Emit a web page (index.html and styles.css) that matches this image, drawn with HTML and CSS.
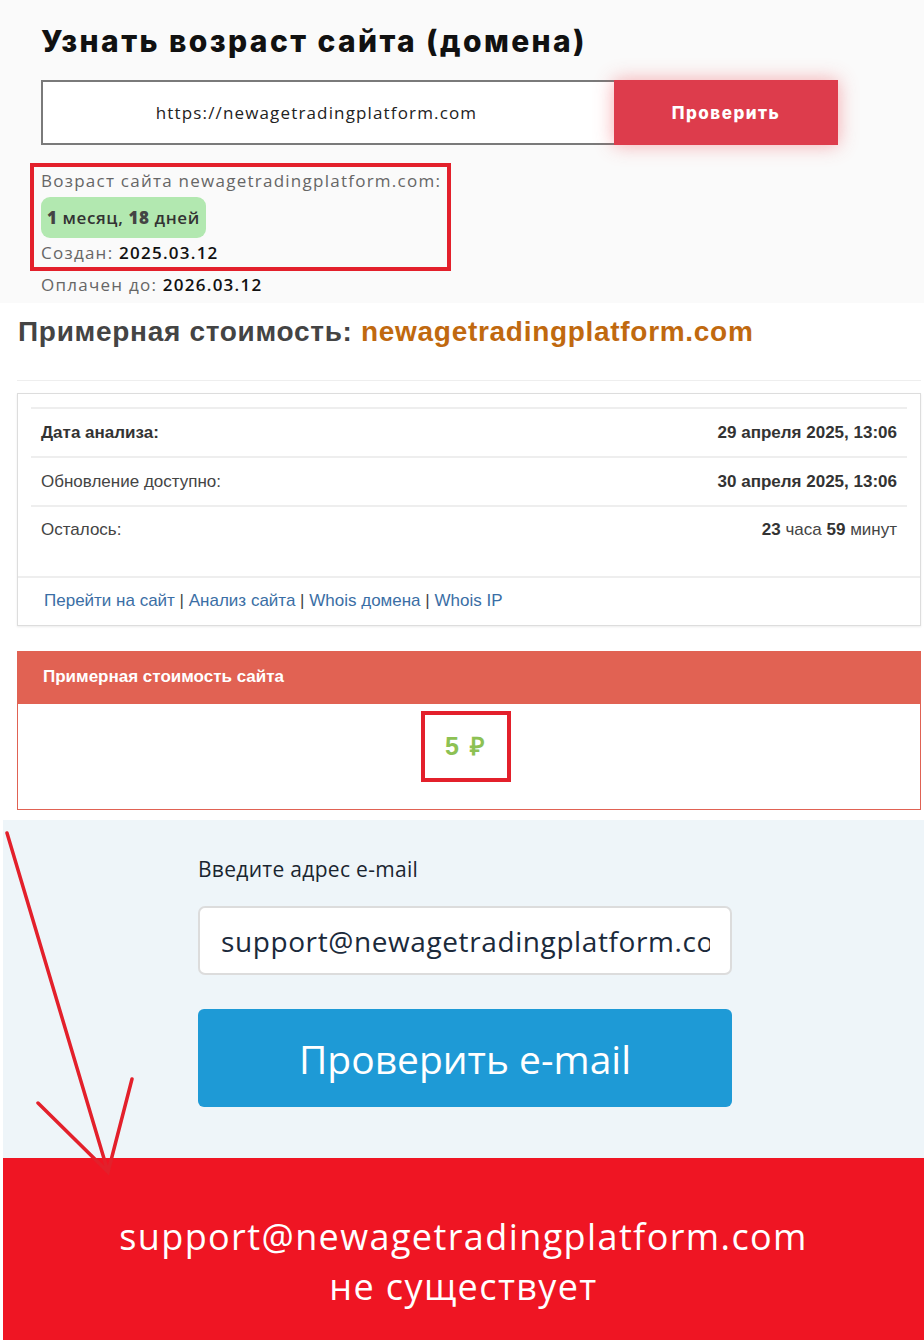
FILE: index.html
```html
<!DOCTYPE html>
<html lang="ru">
<head>
    <meta charset="UTF-8">
    <meta name="viewport" content="width=device-width, initial-scale=1.0">
    <title>Возраст и стоимость сайта</title>
    <link rel="stylesheet" href="styles.css">
</head>
<body>
    <div class="age-block">
        <h1 class="age-title">Узнать возраст сайта (домена)</h1>
        <div class="age-form">
            <div class="age-input">https://newagetradingplatform.com</div>
            <button class="age-btn">Проверить</button>
        </div>
        <div class="age-result">
            <div class="mark-box">
                <div class="age-line">Возраст сайта newagetradingplatform.com:</div>
                <div class="age-badge"><b>1</b> месяц, <b>18</b> дней</div>
                <div class="age-line age-created">Создан: <span class="age-val">2025.03.12</span></div>
            </div>
            <div class="age-line age-paid">Оплачен до: <span class="age-val">2026.03.12</span></div>
        </div>
    </div>

    <div class="cost-block">
        <h2 class="cost-title">Примерная стоимость: <span class="cost-domain">newagetradingplatform.com</span></h2>
        <div class="cost-card">
            <table class="cost-table">
                <tr>
                    <td><b>Дата анализа:</b></td>
                    <td class="val"><b>29 апреля 2025, 13:06</b></td>
                </tr>
                <tr>
                    <td>Обновление доступно:</td>
                    <td class="val"><b>30 апреля 2025, 13:06</b></td>
                </tr>
                <tr>
                    <td>Осталось:</td>
                    <td class="val"><b>23</b> часа <b>59</b> минут</td>
                </tr>
            </table>
            <div class="cost-links">
                <a href="#">Перейти на сайт</a> | <a href="#">Анализ сайта</a> | <a href="#">Whois домена</a> | <a href="#">Whois IP</a>
            </div>
        </div>
        <div class="price-panel">
            <div class="price-head">Примерная стоимость сайта</div>
            <div class="price-body">
                <span class="price-val">5 ₽</span>
            </div>
        </div>
    </div>

    <div class="mail-block">
        <div class="mail-form">
            <div class="mail-label">Введите адрес e-mail</div>
            <div class="mail-input"><span class="mail-text">support@newagetradingplatform.com</span></div>
            <button class="mail-btn">Проверить e-mail</button>
        </div>
    </div>

    <div class="mail-result">
        <div>support@newagetradingplatform.com</div>
        <div>не существует</div>
    </div>

    <svg class="arrow" width="924" height="1340" viewBox="0 0 924 1340">
        <path d="M7 833 L108 1172 M132 1079 L108 1172 L38 1103" fill="none" stroke="#e3202b" stroke-width="3.5" stroke-linecap="round"/>
    </svg>
</body>
</html>
```

FILE: styles.css
```css
body{
	margin: 0;
	background: #ffffff;
	font-family: 'Open Sans', sans-serif;
	position: relative;
}
/* возраст домена */
.age-block{
	background: #fafafa;
	height: 303px;
	padding: 0 0 0 41px;
	box-sizing: border-box;
	overflow: hidden;
}
.age-title{
	margin: 0;
	padding-top: 21px;
	font-family: 'Inter', sans-serif;
	font-size: 30px;
	font-weight: 800;
	letter-spacing: 2.4px;
	color: #111;
	line-height: 40px;
}
.age-form{
	display: flex;
	margin-top: 19px;
	width: 797px;
	height: 65px;
}
.age-input{
	flex: 1;
	border: 2px solid #7a7a7a;
	border-right: none;
	background: #fff;
	display: flex;
	align-items: center;
	justify-content: center;
	font-size: 17px;
	letter-spacing: 1.15px;
	color: #222;
	padding-right: 24px;
}
.age-btn{
	width: 224px;
	border: none;
	background: #dd3c4c;
	color: #fff;
	font-family: 'Inter', sans-serif;
	font-weight: 800;
	font-size: 17px;
	letter-spacing: 1.5px;
	box-shadow: 0 0 18px rgba(240, 70, 80, 0.45);
}
.age-result{
	margin-top: 18px;
	margin-left: -11px;
}
.mark-box{
	display: inline-block;
	border: 4px solid #e3202b;
	padding: 1px 6px 0 7px;
}
.age-line{
	font-size: 17px;
	letter-spacing: 1.25px;
	color: #666;
	line-height: 26px;
}
.age-created{
	margin-top: 1px;
	line-height: 28px;
}
.age-paid{
	padding-left: 11px;
	line-height: 28px;
}
.age-val{
	color: #111;
	font-weight: 600;
}
.age-badge{
	display: inline-block;
	background: #b2e8b0;
	border-radius: 9px;
	padding: 0 6px;
	margin-top: 3px;
	line-height: 41px;
	font-size: 17px;
	font-weight: 600;
	letter-spacing: 0.6px;
	color: #333;
}
.age-badge b{
	font-weight: 800;
	color: #444;
}
/* стоимость */
.cost-block{
	padding: 0 3px 0 17px;
	font-family: 'Liberation Sans', Arial, sans-serif;
}
.cost-title{
	margin: 0;
	padding: 13px 0 0 1px;
	height: 64px;
	border-bottom: 1px solid #eee;
	font-size: 28px;
	letter-spacing: 0.7px;
	line-height: 32px;
	font-weight: 700;
	color: #444;
}
.cost-domain{
	color: #c0690f;
}
.cost-card{
	margin-top: 12px;
	border: 1px solid #ddd;
	box-shadow: 0 1px 2px rgba(0,0,0,0.08);
	background: #fff;
	padding-top: 13px;
}
.cost-table{
	width: calc(100% - 26px);
	margin: 0 13px 23px;
	border-collapse: collapse;
	font-size: 17px;
	color: #444;
}
.cost-table td{
	border-top: 2px solid #eee;
	height: 47px;
	padding: 0 10px;
}
.cost-table tr:last-child td{
	height: 46px;
}
.cost-table b{
	color: #333;
}
.cost-table .val{
	text-align: right;
}
.cost-links{
	border-top: 2px solid #eee;
	height: 47px;
	line-height: 46px;
	padding-left: 26px;
	font-size: 17px;
	color: #444;
}
.cost-links a{
	color: #3a6ea5;
	text-decoration: none;
}
.price-panel{
	margin-top: 25px;
	border: 1px solid #e06253;
}
.price-head{
	background: #e16253;
	color: #fff;
	height: 52px;
	line-height: 50px;
	padding-left: 25px;
	font-size: 17px;
	font-weight: 700;
}
.price-body{
	height: 105px;
	box-sizing: border-box;
	display: flex;
	align-items: flex-start;
	justify-content: center;
	padding: 7px 6px 0 0;
}
.price-val{
	display: inline-block;
	border: 4px solid #e3202b;
	width: 82px;
	height: 63px;
	line-height: 63px;
	text-align: center;
	color: #8dc153;
	font-size: 25px;
	letter-spacing: 2px;
	font-weight: 700;
}
/* проверка почты */
.mail-block{
	margin: 10px 0 0 3px;
	background: #eef5f9;
	height: 338px;
	padding: 0 0 0 195px;
	box-sizing: border-box;
	font-family: 'Open Sans', sans-serif;
}
.mail-form{
	width: 534px;
	padding-top: 34px;
}
.mail-label{
	font-size: 21px;
	color: #1a2530;
	line-height: 30px;
	letter-spacing: 0.3px;
}
.mail-input{
	margin-top: 22px;
	height: 69px;
	box-sizing: border-box;
	background: #fff;
	border: 2px solid #dcdcdc;
	border-radius: 7px;
	display: flex;
	align-items: center;
	padding: 0 20px 0 21px;
	font-size: 28px;
	letter-spacing: 0.6px;
	color: #1b2a3b;
}
.mail-text{
	display: block;
	white-space: nowrap;
	overflow: hidden;
}
.mail-btn{
	margin-top: 34px;
	width: 534px;
	height: 98px;
	border: none;
	border-radius: 6px;
	background: #1e9ad6;
	color: #fff;
	font-family: 'Open Sans', sans-serif;
	font-size: 39px;
}
.mail-result{
	margin-left: 3px;
	background: #ef1523;
	height: 182px;
	display: flex;
	flex-direction: column;
	align-items: center;
	padding-top: 54px;
	box-sizing: border-box;
	color: #fff;
	font-family: 'Open Sans', sans-serif;
	font-size: 36px;
	line-height: 50px;
	letter-spacing: 1.4px;
}
/* стрелка поверх страницы */
.arrow{
	position: absolute;
	left: 0;
	top: 0;
	pointer-events: none;
}
```
